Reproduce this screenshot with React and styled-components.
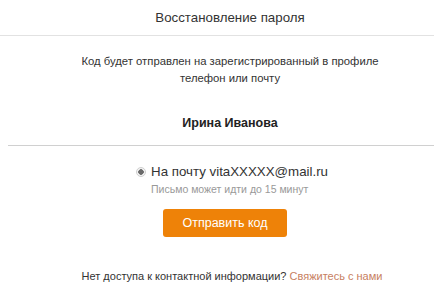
import styled, { createGlobalStyle } from "styled-components";

const GlobalStyle = createGlobalStyle`
  html, body {
    margin: 0;
    padding: 0;
    background: #fff;
    overflow: hidden;
  }
  body {
    font-family: "Liberation Sans", Arial, sans-serif;
    color: #333;
  }
`;

function App() {
  return (
    <>
      <GlobalStyle />
      <Page>
        <Header>Восстановление пароля</Header>

        <Body>
          <Intro>
            Код будет отправлен на зарегистрированный в профиле
            <br />
            телефон или почту
          </Intro>

          <UserName>Ирина Иванова</UserName>
          <Divider />

          <Option>
            <Radio />
            <OptionText>
              <OptionLabel>На почту vitaXXXXX@mail.ru</OptionLabel>
              <OptionHint>Письмо может идти до 15 минут</OptionHint>
            </OptionText>
          </Option>

          <SendButton>Отправить код</SendButton>

          <Footer>
            Нет доступа к контактной информации? <Link href="#">Свяжитесь с нами</Link>
          </Footer>
        </Body>
      </Page>
    </>
  );
}

export default App;

const Page = styled.div`
  width: 100%;
  display: flex;
  flex-direction: column;
`;

const Header = styled.div`
  height: 35px;
  padding-left: 26px;
  border-bottom: 1px solid #e2e2e2;
  font-size: 13.3px;
  line-height: 35px;
  text-align: center;
  color: #333;
`;

const Body = styled.div`
  padding-left: 26px;
  display: flex;
  flex-direction: column;
  align-items: center;
`;

const Intro = styled.p`
  margin: 17px 0 0;
  font-size: 11.3px;
  line-height: 17px;
  text-align: center;
  color: #333;
`;

const UserName = styled.div`
  margin-top: 28px;
  font-size: 12.5px;
  font-weight: 700;
  line-height: 16px;
  color: #222;
`;

const Divider = styled.hr`
  align-self: stretch;
  margin: 14px 0 0 -18px;
  border: 0;
  border-top: 1px solid #d0d0d0;
  height: 0;
`;

const Option = styled.div`
  margin-top: 18px;
  margin-left: 4px;
  display: flex;
  align-items: flex-start;
  gap: 5px;
`;

const Radio = styled.span`
  margin-top: 3px;
  width: 8px;
  height: 8px;
  border-radius: 50%;
  border: 1px solid #cfcfcf;
  background: radial-gradient(circle, #6a6a6a 0 2.5px, #f4f4f4 3px);
  flex-shrink: 0;
`;

const OptionText = styled.div`
  display: flex;
  flex-direction: column;
`;

const OptionLabel = styled.span`
  font-size: 13.3px;
  line-height: 16px;
  color: #333;
`;

const OptionHint = styled.span`
  margin-top: 2px;
  font-size: 10.5px;
  line-height: 14px;
  color: #999;
`;

const SendButton = styled.button`
  margin-top: 13px;
  margin-right: 10px;
  width: 124px;
  height: 28px;
  border: none;
  border-radius: 3px;
  background: #ee8208;
  color: #fff;
  font-family: "Liberation Sans", Arial, sans-serif;
  font-size: 12.5px;
  cursor: pointer;
`;

const Footer = styled.div`
  margin-top: 32px;
  margin-left: 4px;
  font-size: 11px;
  line-height: 15px;
  color: #333;
`;

const Link = styled.a`
  color: #c7805f;
  text-decoration: none;
`;
